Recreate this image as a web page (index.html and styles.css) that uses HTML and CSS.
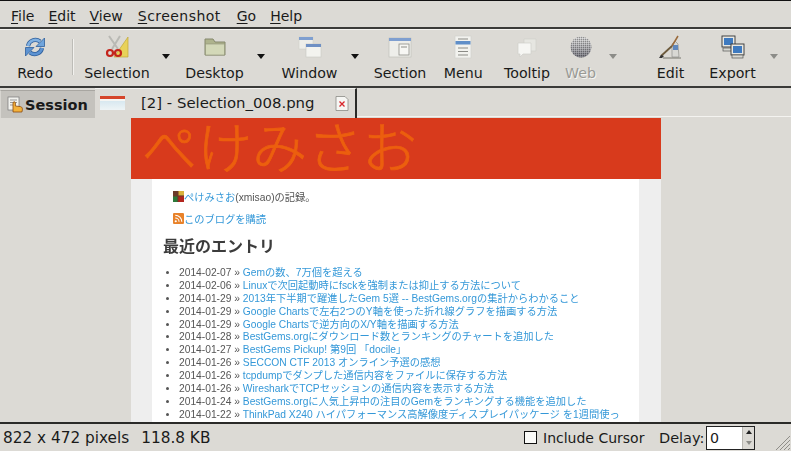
FILE: index.html
```html
<!DOCTYPE html>
<html lang="ja">
<head>
<meta charset="utf-8">
<title>Shutter</title>
<link rel="stylesheet" href="styles.css">
</head>
<body>
<div class="app">
  <nav class="menubar">
    <span class="menu-item"><u>F</u>ile</span>
    <span class="menu-item"><u>E</u>dit</span>
    <span class="menu-item"><u>V</u>iew</span>
    <span class="menu-item m-shot"><u>S</u>creenshot</span>
    <span class="menu-item"><u>G</u>o</span>
    <span class="menu-item"><u>H</u>elp</span>
  </nav>
  <div class="toolbar">
    <div class="tool w-redo">
      <svg class="icon" viewBox="0 0 24 24"><g fill="none"><path d="M5 11A7.500 7.500 0 0 1 17 6.500" stroke="#2f5f9c" stroke-width="4.200"/><path d="M5 11A7.500 7.500 0 0 1 17 6.500" stroke="#7fb0e2" stroke-width="2.600"/><path d="M19 13A7.500 7.500 0 0 1 7 17.500" stroke="#2f5f9c" stroke-width="4.200"/><path d="M19 13A7.500 7.500 0 0 1 7 17.500" stroke="#5d93d2" stroke-width="2.600"/></g><path d="M21.500 3v8.500H13z" fill="#6fa4dc" stroke="#2f5f9c" stroke-width=".8"/><path d="M2.500 21v-8.500H11z" fill="#5d93d2" stroke="#2f5f9c" stroke-width=".8"/></svg>
      <span>Redo</span>
    </div>
    <div class="sep"></div>
    <div class="tool w-selection">
      <svg class="icon" viewBox="0 0 24 24"><path d="M23 2v20H9z" fill="#e8d25a" stroke="#c2a838" stroke-width=".7"/><path d="M4 1l9 13M15 1L7 14" stroke="#b9b9b4" stroke-width="2" fill="none"/><circle cx="5" cy="18" r="3" fill="none" stroke="#c4241c" stroke-width="2.200"/><circle cx="13" cy="18" r="3" fill="none" stroke="#c4241c" stroke-width="2.200"/></svg>
      <span>Selection</span>
    </div>
    <i class="arrow a-1"></i>
    <div class="tool w-desktop">
      <svg class="icon" viewBox="0 0 24 24"><path d="M2 20V4h8l2 3h10v13z" fill="#aeb38d" stroke="#85886c"/><path d="M2.500 20V9h19v11z" fill="#d3d8b8" stroke="#8f9275" stroke-width=".6"/></svg>
      <span>Desktop</span>
    </div>
    <i class="arrow a-2"></i>
    <div class="tool w-window">
      <svg class="icon" viewBox="0 0 24 24"><rect x="1" y="2" width="14" height="12" fill="#eeeeea" stroke="#cfcfca" stroke-width=".6"/><rect x="1" y="2" width="14" height="3" fill="#7f9fd0"/><rect x="8" y="9" width="15" height="13" fill="#f3f3ef" stroke="#c8c8c3" stroke-width=".6"/><rect x="8" y="9" width="15" height="3" fill="#6f90c4"/></svg>
      <span>Window</span>
    </div>
    <i class="arrow a-3"></i>
    <div class="tool w-section">
      <svg class="icon" viewBox="0 0 24 24"><rect x="1" y="3" width="22" height="19" fill="#eeeeea" stroke="#c0c0bb" stroke-width=".7"/><rect x="1" y="3" width="22" height="3" fill="#7f9fd0"/><rect x="11" y="9" width="10" height="11" fill="#f7f7f4" stroke="#8d8d88" stroke-width=".8"/><path d="M13 12h6" stroke="#8d8d88"/></svg>
      <span>Section</span>
    </div>
    <div class="tool w-menu">
      <svg class="icon" viewBox="0 0 24 24"><rect x="4" y="1" width="16" height="22" fill="#f2f2ee" stroke="#d2d2cd" stroke-width=".7"/><rect x="4.500" y="6" width="15" height="3.500" fill="#5f8ec8"/><path d="M7 4h10M7 13h10M7 16.500h10M7 20h10" stroke="#8b8b86"/></svg>
      <span>Menu</span>
    </div>
    <div class="tool w-tooltip">
      <svg class="icon" viewBox="0 0 24 24"><path d="M9 4h12v12H9z" fill="#e6e6e1" stroke="#d0d0cb" stroke-width=".7"/><path d="M3 8h13v11H8l-3 3v-3H3z" fill="#f6f6f3" stroke="#cfcfca" stroke-width=".7"/></svg>
      <span>Tooltip</span>
    </div>
    <div class="tool w-web off">
      <svg class="icon" viewBox="0 0 24 24"><defs><pattern id="dots" width="2" height="2" patternUnits="userSpaceOnUse"><rect width="2" height="2" fill="#b4b4b4"/><rect width="1" height="1" fill="#6d6d6d"/><rect x="1" y="1" width="1" height="1" fill="#d9d9d9"/></pattern><linearGradient id="shade" x1="0" y1="0" x2="0" y2="1"><stop offset="0" stop-color="#fff" stop-opacity=".25"/><stop offset="1" stop-color="#223" stop-opacity=".45"/></linearGradient></defs><circle cx="12" cy="12" r="10.500" fill="url(#dots)"/><circle cx="12" cy="12" r="10.500" fill="url(#shade)"/></svg>
      <span>Web</span>
    </div>
    <i class="arrow off-arrow a-4"></i>
    <div class="tool w-edit">
      <svg class="icon" viewBox="0 0 24 24"><path d="M13 22V9l3-3 3 3 1 13z" fill="#d8d8d4" stroke="#85857f" stroke-width=".6"/><path d="M14 10h5v5h-5z" fill="#5f87bd"/><path d="M19 1l-6 10" stroke="#9a6a3a" stroke-width="1.500"/><path d="M13 11L2 21" stroke="#6d5a3c" stroke-width="1.800"/><path d="M2 20l3 1-2 2H0z" fill="#333"/><path d="M4 23h18" stroke="#77776f"/></svg>
      <span>Edit</span>
    </div>
    <div class="tool w-export">
      <svg class="icon" viewBox="0 0 24 24"><rect x="1" y="1" width="13" height="11" fill="#e8e8e4" stroke="#333" stroke-width=".9"/><rect x="3" y="3" width="9" height="7" fill="#3e7ac0"/><rect x="2" y="13" width="11" height="3" fill="#d8d8d2" stroke="#555" stroke-width=".7"/><rect x="10" y="9" width="13" height="11" fill="#e8e8e4" stroke="#333" stroke-width=".9"/><rect x="12" y="11" width="9" height="7" fill="#3e7ac0"/><rect x="11" y="20" width="11" height="3" fill="#d8d8d2" stroke="#555" stroke-width=".7"/></svg>
      <span>Export</span>
    </div>
    <i class="arrow off-arrow a-5"></i>
  </div>
  <div class="tabs">
    <div class="session">
      <svg class="tab-icon" viewBox="0 0 17 17"><rect x="1" y="1" width="11" height="13" fill="#f2f2ee" stroke="#777" stroke-width=".7"/><path d="M3 4h7M3 6.500h7M3 9h3" stroke="#999"/><path d="M6 16V7c0-1.600 2.400-1.600 2.400 0v3l5 .6c2 .5 2 1.800 2 3.200l-.5 2.200z" fill="#f3b23c" stroke="#8a4a10" stroke-width=".8"/></svg>
      <b>Session</b>
    </div>
    <div class="tab">
      <div class="thumb"></div>
      <span class="tab-title">[2] - Selection_008.png</span>
      <svg class="tab-close" viewBox="0 0 16 16"><path d="M2 1h9l3 3v11H2z" fill="#f6f6f3" stroke="#8a8a85" stroke-width=".8"/><path d="M5.500 6l5 5M10.500 6l-5 5" stroke="#d8262c" stroke-width="1.300"/></svg>
    </div>
    <div class="tab-fill"></div>
  </div>
  <main class="canvas">
    <div class="shot">
      <h1 class="banner">ぺけみさお</h1>
      <div class="paper">
        <div class="sheet">
          <p class="line first"><svg class="mini" viewBox="0 0 10 10"><rect width="10" height="10" fill="#6b3a2a"/><rect x="5" width="5" height="4" fill="#d9b23c"/><rect y="5" width="4" height="5" fill="#2c7a3a"/><rect x="5" y="5" width="5" height="5" fill="#b3261e"/></svg><a>ぺけみさお</a>(xmisao)の記録。</p>
          <p class="line second"><svg class="mini rss" viewBox="0 0 10 10"><rect width="10" height="10" rx="1" fill="#e8822a"/><circle cx="2.500" cy="7.500" r="1" fill="#fff"/><path d="M2 4.500a3.500 3.500 0 0 1 3.500 3.500M2 2a6 6 0 0 1 6 6" stroke="#fff" fill="none"/></svg><a>このブログを購読</a></p>
          <h2 class="recent">最近のエントリ</h2>
          <ul class="entries">
            <li>2014-02-07 » <a>Gemの数、7万個を超える</a></li>
            <li>2014-02-06 » <a>Linuxで次回起動時にfsckを強制または抑止する方法について</a></li>
            <li>2014-01-29 » <a>2013年下半期で躍進したGem 5選 -- BestGems.orgの集計からわかること</a></li>
            <li>2014-01-29 » <a>Google Chartsで左右2つのY軸を使った折れ線グラフを描画する方法</a></li>
            <li>2014-01-29 » <a>Google Chartsで逆方向のX/Y軸を描画する方法</a></li>
            <li>2014-01-28 » <a>BestGems.orgにダウンロード数とランキングのチャートを追加した</a></li>
            <li>2014-01-27 » <a>BestGems Pickup! 第9回 「docile」</a></li>
            <li>2014-01-26 » <a>SECCON CTF 2013 オンライン予選の感想</a></li>
            <li>2014-01-26 » <a>tcpdumpでダンプした通信内容をファイルに保存する方法</a></li>
            <li>2014-01-26 » <a>WiresharkでTCPセッションの通信内容を表示する方法</a></li>
            <li>2014-01-24 » <a>BestGems.orgに人気上昇中の注目のGemをランキングする機能を追加した</a></li>
            <li>2014-01-22 » <a>ThinkPad X240 ハイパフォーマンス高解像度ディスプレイパッケージ を1週間使っ</a></li>
          </ul>
        </div>
      </div>
    </div>
  </main>
  <footer class="status">
    <div class="info"><span>822 x 472 pixels</span><span>118.8 KB</span></div>
    <span class="check"></span>
    <span class="cursor">Include Cursor</span>
    <span class="delay">Delay:</span>
    <div class="spin">
      <span class="spin-val">0</span>
      <div class="spin-btns"><span class="up"></span><span class="down"></span></div>
    </div>
    <svg class="grip" viewBox="0 0 18 18"><path d="M17 3L3 17M17 7L7 17M17 11l-6 6M17 15l-2 2" stroke="#8f8d88" fill="none"/></svg>
  </footer>
</div>
</body>
</html>
```

FILE: styles.css
```css
* { box-sizing: border-box; }
html, body { margin: 0; padding: 0; }
body {
  width: 791px;
  height: 451px;
  overflow: hidden;
  background: #dcdad5;
  font-family: "DejaVu Sans", sans-serif;
  font-size: 14.200px;
  color: #1a1a1a;
}
.app { display: flex; flex-direction: column; height: 451px; border-top: 1px solid #111; }

.menubar {
  height: 28px;
  display: flex;
  align-items: center;
  gap: 14px;
  padding: 3px 0 0 11px;
  border-bottom: 2px solid #3a3a38;
  flex: none;
  font-size: 14px;
}
.menu-item u { text-underline-offset: 2px; }
.m-shot { letter-spacing: .45px; margin-left: 1px; margin-right: 2px; }

.toolbar {
  height: 59px;
  flex: none;
  display: flex;
  position: relative;
  border-bottom: 2px solid #3a3a38;
  border-top: 1px solid #f4f3f0;
}
.tool {
  flex: none;
  display: flex;
  flex-direction: column;
  align-items: center;
  padding-top: 5px;
  white-space: nowrap;
}
.icon { width: 24px; height: 24px; display: block; margin-bottom: 5px; }
.tool span { line-height: 18px; }
.w-redo { width: 70px; }
.sep { width: 2px; height: 36px; margin: 9px 5.500px 0 2px; background: #f2f1ee; border-left: 1px solid #bdbcb7; flex: none; }
.w-selection { width: 75px; }
.w-desktop { width: 72px; margin-left: 24px; }
.w-window { width: 70px; margin-left: 24px; }
.w-section { width: 68px; margin-left: 21.500px; }
.w-menu { width: 58.500px; }
.w-tooltip { width: 69px; }
.w-web { width: 38px; }
.w-edit { width: 50px; margin-left: 46px; }
.w-export { width: 74px; }
.off { color: #9a9a95; text-shadow: 1px 1px 0 #f5f5f2; }
.arrow {
  position: absolute;
  top: 24px;
  width: 0;
  height: 0;
  border-left: 4px solid transparent;
  border-right: 4px solid transparent;
  border-top: 5px solid #111;
}
.off-arrow { border-top-color: #8c8c88; }
.a-1 { left: 162px; }
.a-2 { left: 257px; }
.a-3 { left: 351px; }
.a-4 { left: 609px; }
.a-5 { left: 770px; }

.tabs { height: 30px; flex: none; display: flex; }
.session {
  width: 95px;
  height: 28px;
  margin-top: 2px;
  display: flex;
  align-items: center;
  gap: 1px;
  padding-left: 6px;
  background: #c4c2bd;
  border-top: 1px solid #a8a6a1;
  border-left: 1px solid #d8d6d1;
}
.session b { font-size: 14.500px; font-weight: bold; }
.tab-icon { width: 17px; height: 17px; flex: none; }
.tab {
  width: 262px;
  display: flex;
  align-items: center;
  position: relative;
  padding: 0 0 1px 5px;
  border-top: 1px solid #f4f3f0;
  border-right: 2px solid #2a2a28;
}
.thumb {
  width: 25px;
  height: 14px;
  background: linear-gradient(#d5452a 0 3px, #f5f5f3 3px 5px, #d8e8f0 5px, #eef4f6);
  flex: none;
}
.tab-title { margin-left: 16px; font-size: 14.900px; white-space: nowrap; }
.tab-close { position: absolute; left: 239px; top: 6px; width: 16px; height: 17px; }
.tab-fill { flex: 1; border-bottom: 1px solid #f4f3f0; margin-bottom: 1px; }

.canvas { flex: 1; min-height: 0; display: flex; justify-content: center; overflow: hidden; border-bottom: 2px solid #2a2a28; }
.shot { width: 530px; margin-left: 1px; filter: blur(.4px); overflow: hidden; background: #eee; display: flex; flex-direction: column; }
.banner {
  height: 61px;
  flex: none;
  margin: 0;
  padding-left: 11px;
  background: #d83a1c;
  color: #ec5f0e;
  -webkit-text-stroke: .7px #ec5f0e;
  font-family: "Noto Sans CJK JP", sans-serif;
  font-weight: 300;
  font-size: 55px;
  line-height: 52px;
  white-space: nowrap;
}
.paper { flex: 1; min-height: 0; padding: 0 22px 0 21px; }
.sheet {
  background: #fff;
  height: 100%;
  overflow: hidden;
  padding: 10px 0 0 11px;
  font-family: "Liberation Sans", "Noto Sans CJK JP", sans-serif;
  font-size: 10.250px;
  color: #555;
}
.sheet a { color: #3498d8; }
.line { margin: 0; display: flex; align-items: center; height: 14px; padding-left: 10px; }
.second { margin-top: 8px; }
.mini { width: 11px; height: 11px; flex: none; }
.recent {
  margin: 8px 0 0;
  font-size: 16px;
  line-height: 24px;
  font-weight: bold;
  font-family: "Noto Sans CJK JP", sans-serif;
  color: #3c3c3c;
}
.entries { margin: 10px 0 0; padding: 0 0 0 16px; line-height: 12.900px; white-space: nowrap; }
.entries li { height: 12.900px; }

.status {
  height: 27px;
  flex: none;
  display: flex;
  align-items: center;
  padding-left: 3px;
}
.info { width: 521px; flex: none; display: flex; gap: 12px; font-size: 15.300px; white-space: nowrap; }
.check { width: 13px; height: 13px; border: 1px solid #111; background: #fafaf8; flex: none; }
.cursor { margin-left: 6px; font-size: 14px; width: 116px; }
.delay { font-size: 14.500px; width: 47px; }
.spin {
  width: 49px;
  height: 24px;
  display: flex;
  background: #fff;
  border: 1px solid #222;
  align-items: center;
  flex: none;
}
.spin-val { flex: 1; padding-left: 3px; }
.spin-btns { width: 12px; height: 22px; display: flex; flex-direction: column; align-items: center; justify-content: space-around; background: #dcdad5; border-left: 1px solid #b8b6b1; }
.up { border: 3px solid transparent; border-top: 0; border-bottom: 4px solid #222; }
.down { border: 3px solid transparent; border-bottom: 0; border-top: 4px solid #8c8c88; }
.grip { width: 18px; height: 18px; margin-left: auto; margin-top: 8px; flex: none; }
```
